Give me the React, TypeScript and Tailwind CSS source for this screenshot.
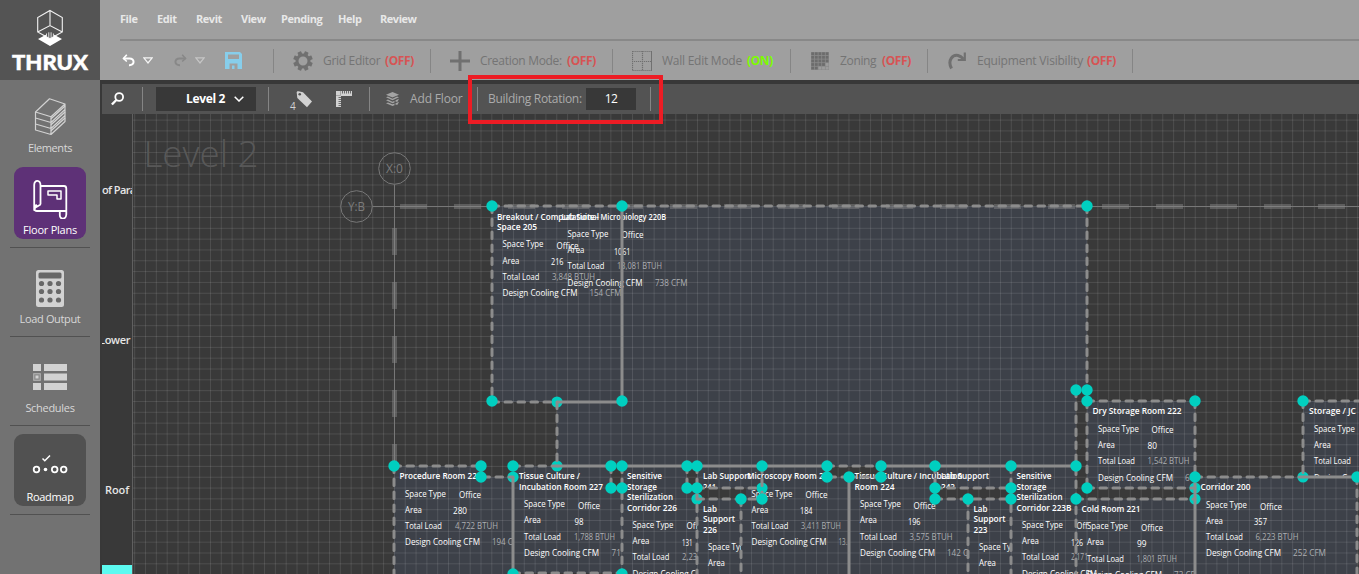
import React from "react";

type Pt = [number, number];

interface Txt {
  x: number;
  y: number;
  t: string;
  w?: number;
  bold?: boolean;
  dim?: boolean;
}

interface Room {
  id: string;
  pts: Pt[];
  clip: boolean;
  texts: Txt[];
}

const title = (x: number, y: number, t: string, w: number): Txt => ({ x, y, t, w, bold: true });

// The four attribute rows of a room; any value may be placed on its own.
const attrs = (
  x: number,
  ys: [number, number, number, number],
  office: Pt | null,
  area: [number, number, string, number] | null,
  load: [number, string, number] | null,
  cfm: [number, string, number] | null,
): Txt[] => {
  const out: Txt[] = [
    { x, y: ys[0], t: "Space Type", w: 41 },
    { x, y: ys[1], t: "Area", w: 17 },
    { x, y: ys[2], t: "Total Load", w: 37 },
    { x, y: ys[3], t: "Design Cooling CFM", w: 75 },
  ];
  if (office) out.push({ x: office[0], y: office[1], t: "Office", w: 22 });
  if (area) out.push({ x: area[0], y: area[1], t: area[2], w: area[3] });
  if (load) out.push({ x: load[0], y: ys[2], t: load[1], w: load[2], dim: true });
  if (cfm) out.push({ x: cfm[0], y: ys[3], t: cfm[1], w: cfm[2], dim: true });
  return out;
};

const rooms: Room[] = [
  {
    id: "r205",
    clip: true,
    pts: [[492, 206], [622, 206], [622, 402], [492, 402]],
    texts: [
      title(497, 220, "Breakout / Computational", 102),
      title(497, 230, "Space 205", 40),
      ...attrs(502.5, [247, 264, 280, 296], [556.5, 249], [551, 265, "216", 12.5], [552, "3,848 BTUH", 43], [589.5, "154 CFM", 32]),
    ],
  },
  {
    id: "r220b",
    clip: false,
    pts: [[622, 206], [1087, 206], [1087, 390], [1076, 390], [1076, 466], [557, 466], [557, 402], [622, 402]],
    texts: [
      title(561.5, 220, "Lab Suite - Microbiology 220B", 104.5),
      ...attrs(567.5, [237, 253, 269, 286], [621.5, 238], [614, 255, "1061", 16.5], [617, "13,081 BTUH", 45], [655, "738 CFM", 32.5]),
    ],
  },
  {
    id: "procedure",
    clip: true,
    pts: [[394, 466], [481, 466], [481, 477], [513, 477], [513, 580], [394, 580]],
    texts: [
      title(399.5, 479, "Procedure Room 228", 82),
      ...attrs(405, [497, 513, 529, 545], [459, 498], [453, 514, "280", 14], [455, "4,722 BTUH", 43], [492, "194 CFM", 32]),
    ],
  },
  {
    id: "tissue227",
    clip: true,
    pts: [[513, 466], [611, 466], [611, 488], [622, 488], [622, 573], [513, 573]],
    texts: [
      title(519, 479, "Tissue Culture /", 61),
      title(519, 490, "Incubation Room 227", 84),
      ...attrs(524, [507, 523, 540, 556], [578, 509], [574.5, 525, "98", 9], [574, "1,788 BTUH", 41], [611.5, "71 CFM", 28]),
    ],
  },
  {
    id: "sens226",
    clip: true,
    pts: [[622, 466], [687, 466], [687, 488], [697, 488], [697, 580], [622, 580]],
    texts: [
      title(627, 479, "Sensitive", 35),
      title(627, 490, "Storage", 30),
      title(627, 500, "Sterilization", 46),
      title(627, 511, "Corridor 226", 50),
      ...attrs(632.5, [528, 544, 560, 577], [686.5, 529], [682, 546, "131", 10.5], [682, "2,231 BTUH", 42], null),
    ],
  },
  {
    id: "lab241",
    clip: true,
    pts: [[697, 466], [762, 466], [762, 488], [697, 488]],
    texts: [title(703, 479, "Lab Support", 48), title(703, 490, "241", 13)],
  },
  {
    id: "lab226",
    clip: true,
    pts: [[697, 499], [741, 499], [741, 580], [697, 580]],
    texts: [
      title(703, 512, "Lab", 14),
      title(703, 522, "Support", 32),
      title(703, 533, "226", 14),
      { x: 708, y: 550, t: "Space Type", w: 41 },
      { x: 708, y: 566, t: "Area", w: 17 },
    ],
  },
  {
    id: "micro",
    clip: true,
    pts: [[746, 466], [827, 466], [827, 477], [849, 477], [849, 580], [741, 580], [741, 499], [746, 499]],
    texts: [
      title(747, 479, "Microscopy Room 225", 86),
      ...attrs(751.5, [497, 513, 529, 545], [805.5, 498], [800, 514, "184", 12.5], [801, "3,411 BTUH", 40], [838.5, "13...", 12]),
    ],
  },
  {
    id: "tissue224",
    clip: false,
    pts: [[849, 477], [881, 477], [881, 466], [935, 466], [935, 499], [968, 499], [968, 580], [849, 580]],
    texts: [
      title(854.5, 479, "Tissue Culture / Incubation", 108),
      title(854.5, 490, "Room 224", 40),
      ...attrs(860, [507, 523, 540, 556], [913.5, 509], [908, 525, "196", 12.5], [909.5, "3,575 BTUH", 43], [947, "142 C", 21]),
    ],
  },
  {
    id: "lab242",
    clip: true,
    pts: [[935, 466], [1011, 466], [1011, 488], [935, 488]],
    texts: [title(941, 479, "Lab Support", 48), title(941, 490, "242", 14)],
  },
  {
    id: "lab223",
    clip: true,
    pts: [[968, 499], [1011, 499], [1011, 580], [968, 580]],
    texts: [
      title(973.5, 512, "Lab", 14),
      title(973.5, 522, "Support", 32),
      title(973.5, 533, "223", 14),
      { x: 979, y: 550, t: "Space Type", w: 41 },
      { x: 979, y: 566, t: "Area", w: 17 },
    ],
  },
  {
    id: "sens223b",
    clip: false,
    pts: [[1011, 466], [1076, 466], [1076, 580], [1011, 580]],
    texts: [
      title(1016.5, 479, "Sensitive", 35),
      title(1016.5, 490, "Storage", 30),
      title(1016.5, 500, "Sterilization", 46),
      title(1016.5, 511, "Corridor 223B", 55),
      ...attrs(1022, [528, 544, 560, 577], null, [1071, 546, "126", 12], [1071, "2,171", 17], null),
      { x: 1076.5, y: 529, t: "Off", w: 11 },
    ],
  },
  {
    id: "dry222",
    clip: true,
    pts: [[1087, 401], [1195, 401], [1195, 488], [1087, 488]],
    texts: [
      title(1092.5, 414, "Dry Storage Room 222", 89),
      ...attrs(1098, [432, 448, 464, 481], [1151.5, 433], [1147.5, 449, "80", 9.5], [1147.5, "1,542 BTUH", 42], [1185, "64 CFM", 28]),
    ],
  },
  {
    id: "cold221",
    clip: true,
    pts: [[1076, 499], [1195, 499], [1195, 580], [1076, 580]],
    texts: [
      title(1081.5, 512, "Cold Room 221", 59),
      ...attrs(1087, [529, 545, 562, 578], [1141, 531], [1137, 547, "99", 9.5], [1136.5, "1,801 BTUH", 40.5], [1174, "73 CFM", 28]),
    ],
  },
  {
    id: "corridor200",
    clip: true,
    pts: [[1195, 477], [1357, 477], [1357, 580], [1195, 580]],
    texts: [
      title(1200.5, 490, "Corridor 200", 50),
      ...attrs(1206, [508, 524, 540, 556], [1260, 510], [1254, 525, "357", 13], [1255.5, "6,223 BTUH", 43], [1293, "252 CFM", 33]),
    ],
  },
  {
    id: "storage",
    clip: true,
    pts: [[1303, 401], [1365, 401], [1365, 477], [1303, 477]],
    texts: [
      title(1309, 414, "Storage / JC", 47),
      ...attrs(1314, [432, 448, 464, 481], null, null, null, null),
    ],
  },
];

const dashed: string[] = [
  "M492 206H1087",
  "M492 206V402",
  "M492 402H557",
  "M557 402V466",
  "M1087 206V488",
  "M1076 390V580",
  "M394 466H481",
  "M394 466V580",
  "M481 466V477H513",
  "M513 466H557",
  "M611 466V488H622",
  "M622 466V580",
  "M513 573H622",
  "M687 466V488H697",
  "M697 466V580",
  "M697 488H762",
  "M697 499H762",
  "M762 466V499",
  "M741 499V580",
  "M827 466V477H849",
  "M827 466H881V477H849",
  "M935 466V499",
  "M935 488H1011",
  "M935 499H1011",
  "M968 499V580",
  "M1011 466V580",
  "M1087 401H1195",
  "M1195 401V477",
  "M1087 488H1195",
  "M1076 499H1195",
  "M1195 477H1303",
  "M1357 477V580",
  "M1303 401H1360",
  "M1303 401V477",
];

const solid: string[] = [
  "M622 206V402",
  "M557 402H622",
  "M557 466H611",
  "M622 466H687",
  "M697 466H827",
  "M881 466H1076",
  "M513 477V573",
  "M849 477V580",
  "M1195 477V580",
  "M1303 477H1357",
];

const backNodes: Pt[] = [[557, 402], [557, 466], [762, 488], [513, 477], [697, 499], [1195, 488], [1195, 499], [1303, 477]];

const nodes: Pt[] = [
  [492, 206], [622, 206], [1087, 206], [492, 401], [622, 401],
  [394, 466], [481, 466], [481, 477], [513, 466], [611, 466], [622, 466], [611, 488], [622, 488],
  [513, 574], [622, 574],
  [687, 466], [697, 466], [687, 488], [697, 488], [762, 466], [741, 499], [762, 499],
  [827, 466], [827, 477], [849, 477], [881, 466], [881, 477],
  [935, 466], [935, 488], [935, 499], [968, 499], [1011, 466], [1011, 488], [1011, 499], [1076, 466], [1076, 499],
  [1076, 390], [1087, 390], [1087, 401], [1195, 401], [1087, 488], [1195, 477],
  [1303, 401], [1357, 477],
];

const toPoints = (pts: Pt[]) => pts.map((p) => p.join(",")).join(" ");

function RoomText({ item }: { item: Txt }) {
  return (
    <text
      x={item.x}
      y={item.y}
      textLength={item.w}
      lengthAdjust="spacingAndGlyphs"
      fontSize={item.bold ? 9.4 : 9.8}
      fontWeight={item.bold ? 600 : 400}
      fill={item.dim ? "#acaeb1" : "#ffffff"}
    >
      {item.t}
    </text>
  );
}

function FloorPlan() {
  const cols = Array.from({ length: 114 }, (_, i) => 134.7 + i * 10.822);
  const rows = Array.from({ length: 43 }, (_, i) => 120.1 + i * 10.822);
  return (
    <svg className="block h-[460px] w-[1227px] bg-[#393939]" viewBox="132 114 1227 460">
      <defs>
        {rooms.map((r) => (
          <clipPath key={r.id} id={r.id}>
            <polygon points={toPoints(r.pts)} />
          </clipPath>
        ))}
      </defs>
      {rooms.map((r) => (
        <polygon key={r.id} points={toPoints(r.pts)} fill="#3d4149" />
      ))}
      <g stroke="#ffffff" strokeOpacity="0.11" strokeWidth="1">
        {cols.map((x) => (
          <line key={x} x1={x} x2={x} y1="114" y2="574" />
        ))}
        {rows.map((y) => (
          <line key={y} x1="132" x2="1359" y1={y} y2={y} />
        ))}
      </g>
      <line x1="132.5" x2="132.5" y1="114" y2="574" stroke="#606060" />
      <text x="143.5" y="166.5" fontSize="37.5" fontWeight="300" fill="#585858" textLength="115" lengthAdjust="spacingAndGlyphs">
        Level 2
      </text>
      <g stroke="#777777" fill="none">
        <circle cx="394.5" cy="168.5" r="15.8" />
        <circle cx="356.5" cy="206.5" r="15.8" />
        <path d="M372.5 206.5H492M394.5 184.5V466M1087 206.5H1359" />
        <path d="M400 206.5H1359" stroke="#8a8a8a" strokeOpacity="0.45" strokeWidth="5" strokeDasharray="27 27" />
        <path d="M394.5 228V466" stroke="#8a8a8a" strokeOpacity="0.45" strokeWidth="5" strokeDasharray="27 27" />
      </g>
      <g fontSize="12" fontWeight="400" fill="#7c7c7c">
        <text x="386" y="173" textLength="17" lengthAdjust="spacingAndGlyphs">X:0</text>
        <text x="348" y="210.5" textLength="17" lengthAdjust="spacingAndGlyphs">Y:B</text>
      </g>
      {rooms.map((r) => (
        <g key={r.id} clipPath={r.clip ? `url(#${r.id})` : undefined}>
          {r.texts.map((t, i) => (
            <RoomText key={i} item={t} />
          ))}
        </g>
      ))}
      <g fill="#00cfc0">
        {backNodes.map(([x, y]) => (
          <circle key={`${x}-${y}`} cx={x} cy={y} r="5.6" />
        ))}
      </g>
      <g stroke="#8c8c8c" strokeWidth="3" fill="none">
        {dashed.map((d) => (
          <path key={d} d={d} strokeDasharray="6.5 6.5" strokeLinecap="round" />
        ))}
        {solid.map((d) => (
          <path key={d} d={d} />
        ))}
      </g>
      <g fill="#00cfc0">
        {nodes.map(([x, y]) => (
          <circle key={`${x}-${y}`} cx={x} cy={y} r="5.7" />
        ))}
      </g>
    </svg>
  );
}

function Logo() {
  return (
    <div className="flex h-20 w-[100px] shrink-0 flex-col items-center bg-[#545454] pt-[9px]">
      <svg className="h-[38px] w-[28px]" viewBox="36 9 28 38" fill="none" stroke="#f2f2f2" strokeWidth="1.1">
        <path d="M50 10.5L62.3 17.5V32L50 38.8L37.7 32V17.5ZM50 10.5V26M37.7 32L50 25.5L62.3 32" />
        <path d="M38 39L46 34.8V36.5L50 39L54 36.5V34.8L62 39L50 46Z" fill="#fff" stroke="none" />
        <path d="M46.5 33.5V36.8M48.8 32.3V38M51.1 32.3V38M53.4 33.5V36.8" strokeWidth="0.9" />
      </svg>
      <svg className="h-[30px] w-[80px]" viewBox="-1 -6 80 30">
        <text x="1" y="16.5" fontFamily="Lato, sans-serif" fontWeight="900" fontSize="21.5" fill="#fff" stroke="#fff" strokeWidth="0.5" textLength="76" lengthAdjust="spacingAndGlyphs">
          THRUX
        </text>
      </svg>
    </div>
  );
}

function NavLabel({ children, className = "" }: { children: React.ReactNode; className?: string }) {
  return (
    <span className={`block h-[14px] text-center text-[11px] leading-[14px] whitespace-nowrap ${className}`}>{children}</span>
  );
}

function Rule() {
  return <div className="mx-[10px] h-px shrink-0 bg-[#515151]" />;
}

function Sidebar() {
  return (
    <nav className="flex h-[494px] w-[100px] shrink-0 flex-col overflow-hidden bg-[#727272] text-[#d8d8d8]">
      <div className="flex h-[87px] flex-col items-center pt-[18px]">
        <svg className="h-[38px] w-[34px]" viewBox="33 98 34 38" fill="none" stroke="#d2d2d2" strokeWidth="1.2" strokeLinejoin="round">
          <path d="M49.5 98.8L65 104L51 116.8L35.5 112ZM35.5 112V130L51 134.5V116.8M35.5 118L51 122.5L65 109.5M35.5 124L51 128.5L65 115.5M51 134.5L65 121.5V104" />
          <path d="M51 118.8L65 106M51 124.8L65 112M51 130.8L65 118" strokeWidth="1.4" />
        </svg>
        <NavLabel className="mt-[5px] tracking-[-0.4px]">Elements</NavLabel>
      </div>
      <div className="mx-[14px] flex h-[72px] shrink-0 flex-col items-center rounded-[9px] bg-[#5e3177] pt-[12px] text-white">
        <svg className="h-[40px] w-[36px]" viewBox="32 178 36 40" fill="none" stroke="#fff" strokeWidth="1.8" strokeLinejoin="round">
          <path d="M40.5 184.5V203C40.5 205 34.2 205 34.2 209V184C34.2 178.5 40.5 178.5 40.5 184.5ZM40.5 185H64C66 185 66.3 186 66.3 187.5V213.5C66 219 59.5 219 59.8 213.5V210H37C33.5 210 33.5 204.5 37 204.2M59.8 210H66" />
          <path d="M48 190H61V198H57V194H48Z" strokeWidth="1.5" />
        </svg>
        <NavLabel className="mt-[4px] tracking-[-0.25px]">Floor Plans</NavLabel>
      </div>
      <div className="h-2 shrink-0" />
      <Rule />
      <div className="flex h-[88px] shrink-0 flex-col items-center pt-[22px]">
        <svg className="h-[37px] w-[28px]" viewBox="0 0 28 37">
          <rect width="28" height="37" rx="2.5" fill="#d2d2d2" />
          <rect x="2.5" y="2.5" width="23" height="6" rx="1.5" fill="#686868" />
          {[13.5, 21.5, 30].map((y) =>
            [5.5, 14, 22.5].map((x) => <circle key={`${x}-${y}`} cx={x} cy={y} r="2.6" fill="#686868" />),
          )}
        </svg>
        <NavLabel className="mt-[5px] tracking-[-0.35px]">Load Output</NavLabel>
      </div>
      <Rule />
      <div className="flex h-[88px] shrink-0 flex-col items-center pt-[27px]">
        <svg className="h-[26px] w-[34px]" viewBox="0 0 34 26" fill="#d2d2d2">
          <path d="M0 0H8V7H0ZM11 0H34V7H11ZM11 9.5H34V16.5H11ZM0 19H8V26H0ZM11 19H34V26H11Z" />
          <rect x="0.7" y="9.7" width="6.6" height="6.6" fill="#8b8b8b" stroke="#b5b5b5" strokeWidth="1" />
          <rect x="2.5" y="11.5" width="3" height="3" />
        </svg>
        <NavLabel className="mt-[11px] tracking-[-0.3px]">Schedules</NavLabel>
      </div>
      <Rule />
      <div className="mx-[14px] mt-2 flex h-[72px] shrink-0 flex-col items-center rounded-[9px] bg-[#515151] pt-[20px] text-white">
        <svg className="h-[20px] w-[36px]" viewBox="32 454 36 20" fill="none" stroke="#fff">
          <path d="M42.5 458.5L44.8 460.8L50 455.5" strokeWidth="1.5" />
          <circle cx="36.5" cy="469.5" r="2.8" strokeWidth="1.8" />
          <circle cx="45.5" cy="469.5" r="1.8" fill="#fff" stroke="none" />
          <circle cx="54.7" cy="469.5" r="2.8" strokeWidth="1.8" />
          <circle cx="63.7" cy="469.5" r="2.8" strokeWidth="1.8" />
        </svg>
        <NavLabel className="mt-[16px] tracking-[-0.3px]">Roadmap</NavLabel>
      </div>
      <div className="h-2 shrink-0" />
      <Rule />
    </nav>
  );
}

function Bar({ className }: { className: string }) {
  return <span className={`w-px shrink-0 ${className}`} />;
}

function Caret({ className }: { className: string }) {
  return (
    <svg className={`h-[7px] w-[10px] shrink-0 ${className}`} viewBox="0 0 10 7" fill="none" stroke="currentColor" strokeWidth="1.2">
      <path d="M0.8 0.8H9.2L5 6Z" />
    </svg>
  );
}

function State({ on }: { on?: boolean }) {
  return (
    <span className={`shrink-0 font-bold tracking-[-0.4px] ${on ? "w-[28px] text-[#7cfc00]" : "w-[30px] text-[#d65454]"}`}>
      {on ? "(ON)" : "(OFF)"}
    </span>
  );
}

const menu: [string, string][] = [
  ["File", "w-[37px]"],
  ["Edit", "w-[39px]"],
  ["Revit", "w-[45px]"],
  ["View", "w-[40px]"],
  ["Pending", "w-[57px]"],
  ["Help", "w-[42px]"],
  ["Review", "w-[40px]"],
];

const gearTeeth = [0, 45, 90, 135, 180, 225, 270, 315];

function MainBar() {
  return (
    <header className="flex h-20 min-w-0 flex-1 flex-col bg-[#9f9f9f] whitespace-nowrap">
      <div className="flex h-[39px] items-center pl-[20px] text-[11px] font-bold tracking-[-0.45px] text-[#e8e8e8]">
        {menu.map(([name, w]) => (
          <span key={name} className={`shrink-0 ${w}`}>{name}</span>
        ))}
      </div>
      <div className="ml-[20px] h-[2px] bg-[#888888]" />
      <div className="flex h-[39px] items-center text-[12px] tracking-[-0.15px] text-[#747474]">
        <svg className="ml-[22px] h-[13px] w-[13px] shrink-0" viewBox="0 0 13 13" fill="none" stroke="#fff" strokeWidth="2">
          <path d="M1.5 4.5H7.5C13 4.5 13 11.5 7 11.2" />
          <path d="M4.8 0.8L1.5 4.5L4.8 7.5" strokeWidth="1.6" />
        </svg>
        <Caret className="ml-[8px] text-[#f5f5f5]" />
        <svg className="ml-[21px] h-[13px] w-[13px] shrink-0" viewBox="0 0 13 13" fill="none" stroke="#888" strokeWidth="2">
          <path d="M11.5 4.5H5.5C0 4.5 0 11.5 6 11.2" />
          <path d="M8.2 0.8L11.5 4.5L8.2 7.5" strokeWidth="1.6" />
        </svg>
        <Caret className="ml-[8px] text-[#c6c6c6]" />
        <svg className="ml-[20px] h-[17px] w-[17px] shrink-0" viewBox="0 0 17 17">
          <path d="M0 0H15L17 2V17H0Z" fill="#87ceeb" />
          <path d="M3 2.5H14V7H3ZM4.5 11.5H12.5V17H9.5V13.5H7V17H4.5Z" fill="#9f9f9f" />
        </svg>
        <Bar className="ml-[31px] h-6 bg-[#858585]" />
        <svg className="ml-[19px] h-5 w-5 shrink-0" viewBox="-10 -10 20 20">
          <circle r="6" fill="none" stroke="#707070" strokeWidth="3" />
          {gearTeeth.map((a) => (
            <rect key={a} x="-2" y="-9.8" width="4" height="4" rx="0.5" fill="#707070" transform={`rotate(${a + 22.5})`} />
          ))}
        </svg>
        <span className="ml-[10px] w-[62px] shrink-0 tracking-[-0.3px]">Grid Editor</span>
        <State />
        <Bar className="ml-[15px] h-6 bg-[#858585]" />
        <svg className="ml-[19px] h-5 w-5 shrink-0" viewBox="0 0 20 20" stroke="#707070" strokeWidth="3">
          <path d="M10 0V20M0 10H20" />
        </svg>
        <span className="ml-[10px] w-[87px] shrink-0 tracking-[-0.3px]">Creation Mode:</span>
        <State />
        <Bar className="ml-[15px] h-6 bg-[#858585]" />
        <svg className="ml-[19px] h-5 w-5 shrink-0" viewBox="0 0 20 20" fill="none" stroke="#707070">
          <path d="M0.5 0.5H20M0.5 19.5H20M0.5 0V20M10.5 0V20M0 10.5H20" strokeWidth="1.2" strokeDasharray="1.2 0.8" />
          <path d="M19.5 0V20" strokeWidth="1" />
        </svg>
        <span className="ml-[10px] w-[85px] shrink-0 tracking-[-0.25px]">Wall Edit Mode</span>
        <State on />
        <Bar className="ml-[15px] h-6 bg-[#858585]" />
        <svg className="ml-[20px] h-[18px] w-[18px] shrink-0" viewBox="0 0 18 18">
          <rect width="18" height="18" fill="#8a8a8a" />
          {[0, 1, 2, 3, 4].map((r) =>
            [0, 1, 2, 3, 4].map((c) => (
              <rect key={`${r}-${c}`} x={0.3 + c * 3.6} y={0.3 + r * 3.6} width="2.8" height="2.8" fill={r + c > 6 || (r === 4 && c > 1) ? "#9c9c9c" : "#6c6c6c"} />
            )),
          )}
        </svg>
        <span className="ml-[11px] w-[42px] shrink-0 tracking-[-0.35px]">Zoning</span>
        <State />
        <Bar className="ml-[15px] h-6 bg-[#858585]" />
        <svg className="ml-[20px] h-[18px] w-[19px] shrink-0" viewBox="0 0 19 18" fill="none" stroke="#707070">
          <path d="M3.5 16.5C-1 8 5 2.5 10 3.5C12 4 13.5 5 15.5 7" strokeWidth="3" />
          <path d="M16.8 0.5V8H9.8" strokeWidth="2.2" />
        </svg>
        <span className="ml-[10px] w-[110px] shrink-0 tracking-[-0.2px]">Equipment Visibility</span>
        <State />
        <Bar className="ml-[15px] h-6 bg-[#858585]" />
      </div>
    </header>
  );
}

function SubBar() {
  return (
    <div className="ml-[2px] flex h-[30px] shrink-0 items-center bg-[#535353] text-[12px] tracking-[-0.15px] whitespace-nowrap text-[#ababab]">
      <svg className="ml-[9px] h-[14px] w-[13px] shrink-0" viewBox="0 0 13 14" fill="none" stroke="#fff">
        <circle cx="8.2" cy="5" r="3.9" strokeWidth="1.8" />
        <path d="M5.3 8L0.9 12.5" strokeWidth="2.4" />
      </svg>
      <Bar className="ml-[18px] h-6 bg-[#858585]" />
      <div className="ml-[13px] flex h-6 w-[100px] shrink-0 items-center bg-[#383838] pl-[30px] font-bold text-white">
        <span className="w-[48px] text-[12px] tracking-[-0.35px]">Level 2</span>
        <svg className="h-[6px] w-[10px]" viewBox="0 0 10 6" fill="none" stroke="#fff" strokeWidth="1.5">
          <path d="M0.7 0.7L5 5L9.3 0.7" />
        </svg>
      </div>
      <Bar className="ml-[12px] h-6 bg-[#858585]" />
      <svg className="ml-[20px] h-[26px] w-[24px] shrink-0" viewBox="289 86 24 26">
        <path d="M296.7 92.5C296.7 91.5 297.5 91 298.5 91.2L303 92.3L312 101.5L307 107.2L297.3 98Z" fill="#d2d2d2" />
        <circle cx="299.7" cy="94.2" r="1.3" fill="#535353" />
        <text x="290" y="109.5" fontSize="10" fill="#d2d2d2">4</text>
      </svg>
      <svg className="ml-[23px] h-4 w-4 shrink-0" viewBox="0 0 16 16">
        <path d="M0 0H16V5H5V16H0Z" fill="#d2d2d2" />
        <path d="M6.5 0V2.5M8.5 0V2.5M10.5 0V2.5M12.5 0V2.5M14.5 0V2.5M5 6.5H2.5M5 8.5H2.5M5 10.5H2.5M5 12.5H2.5M5 14.5H2.5" stroke="#535353" strokeWidth="0.8" />
        <path d="M0 4.5H4.5V0" fill="none" stroke="#8a8a8a" strokeWidth="0.6" />
      </svg>
      <Bar className="ml-[17px] h-6 bg-[#858585]" />
      <svg className="ml-[16px] h-[14px] w-[13px] shrink-0" viewBox="0 0 13 14" fill="#a3a3a3">
        <path d="M6.5 0L13 2.7L6.5 5.5L0 2.7Z" />
        <path d="M0 5.3L2 4.5L6.5 6.7L11 4.5L13 5.3L6.5 8.3ZM0 8.3L2 7.5L6.5 9.7L8.5 8.7V10.5L6.5 11.3ZM0 11.2L2 10.4L6.5 12.3L8.5 11.5V13.2L6.5 14ZM9.5 8.3L13 6.8L11.5 9.8H9.5ZM9.5 11.3L13 9.8L11.5 12.8H9.5Z" />
      </svg>
      <span className="ml-[11px] w-[57px] shrink-0">Add Floor</span>
      <Bar className="ml-[10px] h-6 bg-[#858585]" />
      <span className="ml-[10px] w-[98px] shrink-0 tracking-[-0.3px]">Building Rotation:</span>
      <div className="flex h-[22px] w-[50px] shrink-0 items-center justify-center bg-[#383838] tracking-[-0.6px] text-white">12</div>
      <Bar className="ml-[14px] h-6 bg-[#858585]" />
    </div>
  );
}

function LevelStrip() {
  return (
    <aside className="ml-[2px] flex h-[460px] w-[30px] shrink-0 flex-col overflow-hidden bg-[#393939] text-[11px] leading-[14px] font-semibold whitespace-nowrap text-[#e6e6e6]">
      <span className="mt-[69px] h-[14px] tracking-[-0.6px]">of Parapet</span>
      <span className="mt-[136px] -ml-[3px] h-[14px] tracking-[-0.3px]">Lower</span>
      <span className="mt-[136px] ml-[3px] h-[14px] tracking-[-0.1px]">Roof</span>
      <div className="mt-auto h-[9px] bg-[#5cfaf0]" />
    </aside>
  );
}

export default function App() {
  return (
    <div className="relative flex h-[574px] w-[1359px] flex-col overflow-hidden bg-[#383838] font-['Open_Sans','Noto_Sans',sans-serif]">
      <div className="flex shrink-0">
        <Logo />
        <MainBar />
      </div>
      <div className="flex">
        <Sidebar />
        <main className="flex min-w-0 flex-1 flex-col pt-1">
          <SubBar />
          <div className="flex">
            <LevelStrip />
            <FloorPlan />
          </div>
        </main>
      </div>
      <div className="pointer-events-none absolute top-[75px] left-[468px] h-[49px] w-[195px] border-4 border-[#ed1c24]" />
    </div>
  );
}
